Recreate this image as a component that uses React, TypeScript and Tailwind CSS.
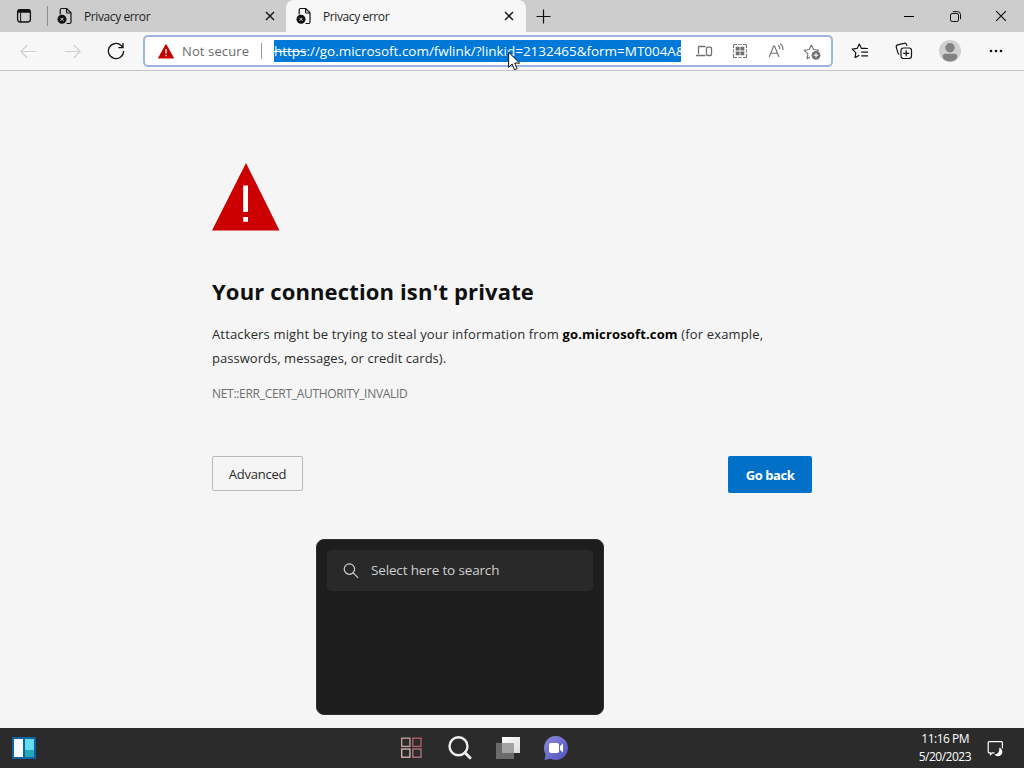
import type { ReactNode } from "react";
import clsx from "clsx";

function TabActionsIcon() {
  return (
    <svg width="16" height="16" viewBox="0 0 16 16" fill="none" stroke="#111" strokeWidth="1.3">
      <rect x="1.6" y="1.6" width="12.8" height="12.4" rx="2.4" />
      <path d="M1.8 3.8h12.4M2.2 2.4h11.6" strokeWidth="2" />
      <path d="M4.6 4.5v9.5" strokeWidth="1" />
    </svg>
  );
}

function PageErrorIcon() {
  return (
    <svg width="16" height="18" viewBox="0 0 16 18" fill="none" stroke="#111" strokeWidth="1.2">
      <path d="M3.2 7.5V3c0-.9.6-1.5 1.5-1.5h5l4.3 4.3v9.2c0 .9-.6 1.5-1.5 1.5H9.6" />
      <path d="M9.6 1.7v3.2c0 .7.4 1.1 1.1 1.1h3.2" />
      <circle cx="5" cy="12.3" r="4.5" fill="#111" stroke="none" />
      <path d="M3.5 10.8l3 3M6.5 10.8l-3 3" stroke="#ddd" strokeWidth="1" />
    </svg>
  );
}

function CloseIcon({ size = 10, thin = false }: { size?: number; thin?: boolean }) {
  return (
    <svg width={size} height={size} viewBox="0 0 10 10" stroke="#111" strokeWidth={thin ? 1 : 1.4}>
      <path d="M1 1l8 8M9 1l-8 8" />
    </svg>
  );
}

function Tab({ active = false, children }: { active?: boolean; children: ReactNode }) {
  return (
    <div
      className={clsx(
        "flex h-8 items-center",
        active ? "w-[240px] rounded-t-lg bg-[#f7f7f7] pl-[10px] pr-[12px]" : "w-[238px] pl-[9px] pr-[11px]"
      )}
    >
      <PageErrorIcon />
      <span className="ml-[11px] flex-1 pt-px text-[12px] tracking-[-0.4px] text-[#222]">{children}</span>
      <CloseIcon />
    </div>
  );
}

function TabStrip() {
  return (
    <div className="flex h-8 shrink-0 items-center bg-[#cdcdcd]">
      <div className="flex w-[48px] items-center pl-4">
        <TabActionsIcon />
        <div className="ml-[15px] h-5 w-px bg-[#8f8f8f]" />
      </div>
      <Tab>Privacy error</Tab>
      <Tab active>Privacy error</Tab>
      <svg className="ml-[10px]" width="15" height="15" viewBox="0 0 15 15" stroke="#111" strokeWidth="1.2">
        <path d="M7.5 .5v14M.5 7.5h14" />
      </svg>
      <div className="ml-auto flex items-center">
        <div className="flex w-[46px] justify-center">
          <div className="h-px w-[10px] bg-black" />
        </div>
        <div className="flex w-[46px] justify-center">
          <svg width="11" height="11" viewBox="0 0 11 11" fill="none" stroke="#111">
            <rect x=".5" y="2.5" width="8" height="8" rx="1.6" />
            <path d="M2.8.6h4.7a3 3 0 0 1 3 3v4.6" />
          </svg>
        </div>
        <div className="flex w-[46px] justify-center">
          <CloseIcon size={12} thin />
        </div>
      </div>
    </div>
  );
}

function Arrow({ flip = false }: { flip?: boolean }) {
  return (
    <div className="flex w-11 justify-center">
      <svg
        className={flip ? "rotate-180" : ""}
        width="17"
        height="15"
        viewBox="0 0 17 15"
        fill="none"
        stroke="#cfcfcf"
        strokeWidth="1.2"
      >
        <path d="M16.2 7.5H.8M7.3 1L.8 7.5 7.3 14" />
      </svg>
    </div>
  );
}

function ReloadIcon() {
  return (
    <svg width="18" height="18" viewBox="0 0 18 18" fill="none" stroke="#111" strokeWidth="1.3">
      <path d="M16.6 9a7.6 7.6 0 1 1-2.4-5.5l1.7 1.7" />
      <path d="M16 1v4.6h-4.7" />
    </svg>
  );
}

function AddressBar() {
  return (
    <div className="flex h-8 w-[690px] items-center rounded-[5px] border-2 border-[#9eb5e0] bg-white pl-[13px]">
      <svg width="16" height="15" viewBox="0 0 16 15">
        <path d="M8 .9L15.3 14H.7z" fill="#c50000" stroke="#c50000" strokeLinejoin="round" strokeWidth="1.2" />
        <path d="M8 5v4.6M8 10.8v1.5" stroke="#fff" strokeWidth="1.3" />
      </svg>
      <span className="ml-2 w-[67px] whitespace-nowrap pt-px text-[13px] tracking-[0.12px] text-[#6b6b6b]">Not secure</span>
      <div className="ml-3 h-4 w-px bg-[#9a9a9a]" />
      <div className="ml-[12px] h-[22px] w-[407px] overflow-hidden whitespace-nowrap bg-[#0078d7] text-[13.5px] leading-[22px] tracking-[-0.03px] text-white">
        <span className="line-through">https</span>://go.microsoft.com/fwlink/?linkid=2132465&amp;form=MT004A&amp;
      </div>
      <div className="ml-[5px] flex items-center text-[#707070]">
        <div className="flex w-9 justify-center">
          <svg width="17" height="12" viewBox="0 0 17 12" fill="none" stroke="currentColor" strokeWidth="1.3">
            <path d="M9.5 1.5h-6a1 1 0 0 0-1 1v6.5M0 10.5h9.5" />
            <rect x="10.5" y="2.2" width="5" height="8.3" rx="1.2" />
          </svg>
        </div>
        <div className="flex w-9 justify-center">
          <svg width="16" height="16" viewBox="0 0 16 16" fill="none" stroke="currentColor" strokeWidth="1.1">
            <path d="M1.5 5V2.5a1 1 0 0 1 1-1H5M11 1.5h2.5a1 1 0 0 1 1 1V5M14.5 11v2.5a1 1 0 0 1-1 1H11M5 14.5H2.5a1 1 0 0 1-1-1V11" />
            <path d="M3.7 3.7h3.9v3.9H3.7zM8.4 3.7h3.9v3.9H8.4zM3.7 8.4h3.9v3.9H3.7zM8.4 8.4h3.9v3.9H8.4z" fill="currentColor" stroke="none" />
            <path d="M6.2 1.5h3.6M6.2 14.5h3.6M1.5 6.2v3.6M14.5 6.2v3.6" strokeWidth=".8" />
          </svg>
        </div>
        <div className="flex w-9 justify-center">
          <svg width="17" height="16" viewBox="0 0 17 16" fill="none" stroke="currentColor" strokeWidth="1.1">
            <path d="M1.2 14L5.7 3h.8L11 14M2.8 10.2h6.6" />
            <path d="M10 2.3c1.3.8 1.9 2 1.8 3.8M12 .8c2 1.3 3.2 3.5 2.9 6.5" />
          </svg>
        </div>
        <div className="flex w-9 justify-center">
          <svg width="18" height="17" viewBox="0 0 18 17" fill="none" stroke="currentColor" strokeWidth="1.1">
            <path d="M7 14.1l-2.9 1.6.8-4.8L1.3 7.3l4.9-.8L8.4 2l2.2 4.5 4.9.8-1.2 1.2" strokeLinejoin="round" />
            <circle cx="13" cy="12.3" r="4.4" fill="currentColor" stroke="none" />
            <path d="M13 10v4.6M10.7 12.3h4.6" stroke="#fff" />
          </svg>
        </div>
      </div>
    </div>
  );
}

function Toolbar() {
  return (
    <div className="flex h-[39px] shrink-0 items-center border-b border-[#c4c4c4] bg-[#f7f7f7] pl-[6px]">
      <Arrow />
      <Arrow flip />
      <div className="mr-[5px] flex w-11 justify-center">
        <ReloadIcon />
      </div>
      <AddressBar />
      <div className="ml-[5px] flex items-center text-[#151515]">
        <div className="flex w-11 justify-center">
          <svg width="18" height="16" viewBox="0 0 18 16" fill="none" stroke="currentColor" strokeWidth="1.2">
            <path d="M4 14.6l.8-5L1.2 6.1l4.9-.7L8.3 1l2.2 4.4H15M4 14.6l4.3-2.3" strokeLinejoin="round" />
            <path d="M10.5 5.5H17M10.3 9.2H17M10.3 12.8H17" />
          </svg>
        </div>
        <div className="flex w-11 justify-center">
          <svg width="18" height="18" viewBox="0 0 18 18" fill="none" stroke="currentColor" strokeWidth="1.2">
            <rect x="6" y="6" width="10.5" height="10.5" rx="2.4" />
            <path d="M11.2 8.3v6M8.2 11.3h6" />
            <path d="M4.2 12.4c-.7-.2-1-.7-1.2-1.3L1.3 5.3c-.3-1.2.3-2.2 1.4-2.5L9 1.3c1.1-.3 2.1.2 2.6 1.3l.4 1.3" />
          </svg>
        </div>
        <div className="flex w-12 justify-center">
          <svg width="22" height="22" viewBox="0 0 22 22">
            <circle cx="11" cy="11" r="11" fill="#d2d0ce" />
            <circle cx="11" cy="7.7" r="4.7" fill="#828282" />
            <path d="M3.7 16.3c0-1.7 1-2.6 2.6-2.6h9.4c1.6 0 2.6.9 2.6 2.6 0 3-3.3 5.1-7.3 5.1s-7.3-2.1-7.3-5.1z" fill="#828282" />
          </svg>
        </div>
        <div className="flex w-11 justify-center">
          <svg width="14" height="4" viewBox="0 0 14 4" fill="#111">
            <circle cx="2" cy="2" r="1.3" />
            <circle cx="7" cy="2" r="1.3" />
            <circle cx="12" cy="2" r="1.3" />
          </svg>
        </div>
      </div>
    </div>
  );
}

function ErrorPage() {
  return (
    <main className="flex flex-1 flex-col pl-[212px] pt-[92px]">
      <svg width="68" height="68" viewBox="0 0 68 68">
        <path d="M34 0L67.5 67.5H0z" fill="#cc0000" />
        <path d="M31.2 22.5h4.8v26.5h-4.8zM31.2 54h4.8v4.7h-4.8z" fill="#fff" />
      </svg>
      <h1 className="mt-[44px] whitespace-nowrap text-[22px] font-bold leading-8 tracking-[0.14px] text-[#101010]">
        Your connection isn't private
      </h1>
      <p className="mt-[15px] w-[600px] text-[13px] leading-6 text-[#2b2b2b]">
        <span className="whitespace-nowrap tracking-[0.15px]">
          Attackers might be trying to steal your information from{" "}
          <strong className="font-bold text-black">go.microsoft.com</strong> (for example,
        </span>
        <br />
        <span className="tracking-[0.04px]">passwords, messages, or credit cards).</span>
      </p>
      <p className="mt-[14px] text-[12px] leading-5 tracking-[-0.3px] text-[#6e6e6e]">NET::ERR_CERT_AUTHORITY_INVALID</p>
      <div className="mt-[52px] flex w-[600px] items-start justify-between">
        <button className="h-[35px] w-[91px] rounded-[2px] border border-[#b9b9b9] pt-[2px] text-[13px] tracking-[-0.25px] text-[#2b2b2b]">
          Advanced
        </button>
        <button className="h-[37px] w-[84px] rounded-[2px] bg-[#0070c9] pt-[2px] text-[13px] font-bold tracking-[-0.45px] text-white">
          Go back
        </button>
      </div>
    </main>
  );
}

function SearchFlyout() {
  return (
    <div className="absolute left-[316px] top-[539px] h-[176px] w-[288px] rounded-lg border border-[#303030] bg-[#1d1d1d] px-[10px] pt-[10px]">
      <div className="flex h-[41px] items-center rounded-[5px] bg-[#292929] pl-4 text-[#cfcfcf]">
        <svg width="16" height="16" viewBox="0 0 16 16" fill="none" stroke="currentColor" strokeWidth="1.2">
          <circle cx="6.4" cy="6.1" r="5.2" />
          <path d="M10.2 9.9l4.9 4.9" />
        </svg>
        <span className="ml-[12px] text-[13.5px] tracking-[-0.15px]">Select here to search</span>
      </div>
    </div>
  );
}

function Taskbar() {
  return (
    <footer className="flex h-10 shrink-0 items-center bg-[#2b2b2b]">
      <svg className="ml-3" width="24" height="22" viewBox="0 0 24 22">
        <rect width="24" height="22" rx="1" fill="#0b64a8" />
        <rect x="2" y="2" width="9" height="18" fill="#f5fbfd" />
        <rect x="13" y="2" width="9" height="11" fill="#64dcec" />
        <rect x="13" y="13" width="9" height="7" fill="#25a8b5" />
      </svg>
      <div className="ml-[364px] flex items-center">
        <svg width="23" height="22" viewBox="0 0 23 22" fill="none" strokeWidth="1.3">
          <rect x="1.7" y="1.2" width="8.2" height="8.2" stroke="#d0a2a2" />
          <rect x="12.8" y="1.2" width="8.2" height="8.2" stroke="#b5606c" />
          <rect x="1.7" y="12" width="8.2" height="8.2" stroke="#e0b8bb" />
          <rect x="12.8" y="12" width="8.2" height="8.2" stroke="#b77880" />
        </svg>
        <svg className="ml-[25px]" width="24" height="24" viewBox="0 0 24 24" fill="none" stroke="#f0f0f0">
          <circle cx="10.5" cy="10.2" r="9" strokeWidth="2.4" />
          <path d="M17 16.7l5 5" strokeWidth="3" strokeLinecap="round" />
        </svg>
        <svg className="ml-[24px]" width="24" height="22" viewBox="0 0 24 22">
          <defs>
            <linearGradient id="frontWindow" x2="1" y2="1">
              <stop stopColor="#fff" />
              <stop offset="1" stopColor="#dcdcdc" />
            </linearGradient>
          </defs>
          <rect x="6" width="18" height="16" fill="url(#frontWindow)" />
          <rect y="6" width="18" height="16" fill="#6b6b6b" />
          <rect x="6" y="6" width="12" height="10" fill="#a3a3a3" />
        </svg>
        <svg className="ml-[24px]" width="24" height="24" viewBox="0 0 24 24">
          <defs>
            <linearGradient id="chatBubble" x2="1" y2="1">
              <stop stopColor="#8a8bdc" />
              <stop offset="1" stopColor="#5050bd" />
            </linearGradient>
          </defs>
          <path d="M12 0a12 12 0 1 1-5.3 22.8L.6 24 1.6 18A12 12 0 0 1 12 0z" fill="url(#chatBubble)" />
          <rect x="5" y="7" width="10" height="10" rx="1.8" fill="#fff" />
          <path d="M16 10.3L19 7.6v8.8l-3-2.7z" fill="#fff" />
        </svg>
      </div>
      <div className="ml-auto flex items-center">
        <div className="flex w-[70px] flex-col items-end whitespace-nowrap text-[12px] leading-[18px] tracking-[-0.5px] text-white">
          <span className="mr-[2px]">11:16 PM</span>
          <span>5/20/2023</span>
        </div>
        <svg className="ml-[16px] mr-[20px]" width="17" height="17" viewBox="0 0 17 17">
          <path d="M7.5 12.8H5.3L3.5 14.5v-1.7H2.2a1 1 0 0 1-1-1V2.7a1 1 0 0 1 1-1h12.2a1 1 0 0 1 1 1v5.5" fill="none" stroke="#fff" strokeWidth="1.2" />
          <path d="M12.2 7.6a4.4 4.4 0 1 1-4.9 6.7c3 .2 5.6-2.2 4.9-6.7z" fill="#fff" />
        </svg>
      </div>
    </footer>
  );
}

function MouseCursor() {
  return (
    <svg className="absolute left-[508px] top-[51px]" width="13" height="20" viewBox="0 0 13 20">
      <path d="M.6 1.2v15.1l3.5-3.3 2.4 5.7 2.6-1.1-2.4-5.5h4.9z" fill="#fff" stroke="#111" />
    </svg>
  );
}

export default function App() {
  return (
    <div className="relative flex h-[768px] w-[1024px] flex-col overflow-hidden bg-[#f5f5f5] font-['Open_Sans','Noto_Sans',sans-serif]">
      <TabStrip />
      <Toolbar />
      <ErrorPage />
      <Taskbar />
      <SearchFlyout />
      <MouseCursor />
    </div>
  );
}
